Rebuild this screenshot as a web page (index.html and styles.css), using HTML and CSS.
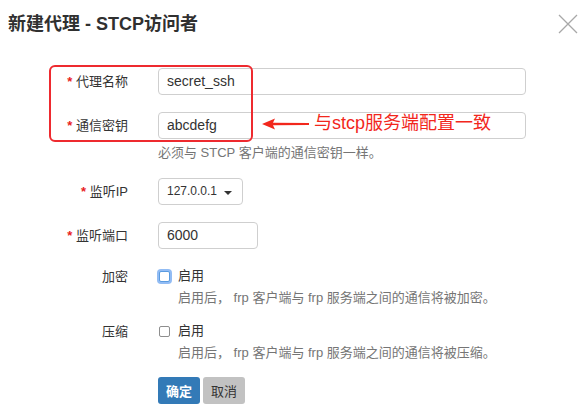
FILE: index.html
```html
<!DOCTYPE html>
<html lang="zh-CN">
<head>
<meta charset="utf-8">
<title>新建代理 - STCP访问者</title>
<link rel="stylesheet" href="styles.css">
</head>
<body>
<div class="dialog">
  <div class="header">
    <h1 class="title">新建代理 - STCP访问者</h1>
    <svg class="close" width="20" height="20" viewBox="0 0 20 20"><path d="M1 1L19 19M19 1L1 19" stroke="#a8a8a8" stroke-width="1.3" fill="none"/></svg>
  </div>
  <div class="form">
    <div class="row r-name">
      <label class="label"><span class="req">*</span> 代理名称</label>
      <div class="field"><div class="input wide">secret_ssh</div></div>
    </div>
    <div class="row r-key">
      <label class="label"><span class="req">*</span> 通信密钥</label>
      <div class="field">
        <div class="input wide">abcdefg</div>
        <div class="help help-key">必须与 STCP 客户端的通信密钥一样。</div>
      </div>
    </div>
    <div class="row r-ip">
      <label class="label"><span class="req">*</span> 监听IP</label>
      <div class="field"><div class="input select"><span class="sel-text">127.0.0.1</span><span class="caret"></span></div></div>
    </div>
    <div class="row r-port">
      <label class="label"><span class="req">*</span> 监听端口</label>
      <div class="field"><div class="input port">6000</div></div>
    </div>
    <div class="row r-enc">
      <label class="label lbl-check">加密</label>
      <div class="field">
        <div class="check"><span class="box focus"></span>启用</div>
        <div class="help help-check">启用后， frp 客户端与 frp 服务端之间的通信将被加密。</div>
      </div>
    </div>
    <div class="row r-zip">
      <label class="label lbl-check">压缩</label>
      <div class="field">
        <div class="check"><span class="box"></span>启用</div>
        <div class="help help-check">启用后， frp 客户端与 frp 服务端之间的通信将被压缩。</div>
      </div>
    </div>
    <div class="row r-btn">
      <div class="label"></div>
      <div class="field buttons">
        <button class="btn primary">确定</button>
        <button class="btn cancel">取消</button>
      </div>
    </div>
  </div>
  <div class="mark-box"></div>
  <svg class="arrow" width="50" height="12" viewBox="0 0 50 12"><path d="M1 6L14 0.5L12 4.8L48 5L48 7L12 7.2L14 11.5Z" fill="#f2271c"/></svg>
  <div class="note">与stcp服务端配置一致</div>
</div>
</body>
</html>
```
FILE: styles.css
```css
* { box-sizing: border-box; }
html, body { margin: 0; padding: 0; background: #fff; }
body {
  font-family: "Liberation Sans", "Noto Sans CJK SC", sans-serif;
  color: #333;
  width: 583px;
  height: 414px;
  overflow: hidden;
}
.dialog { position: relative; width: 583px; height: 414px; }
.header {
  height: 50px;
  display: flex;
  align-items: center;
  justify-content: space-between;
  padding: 0 5px 0 8px;
}
.title {
  margin: 0;
  font-size: 18px;
  font-weight: bold;
  color: #303030;
  line-height: 24px;
  position: relative;
  top: -1px;
}
.close { position: relative; top: -1px; }
.form { display: flex; flex-direction: column; padding-top: 18px; }
.row { display: grid; grid-template-columns: 128px 1fr; column-gap: 30px; }
.label {
  text-align: right;
  font-size: 13px;
  line-height: 27px;
  color: #333;
  white-space: nowrap;
}
.req { color: #e81d1d; font-weight: bold; }
.field { display: flex; flex-direction: column; align-items: flex-start; }
.input {
  height: 27px;
  border: 1px solid #cfcfcf;
  border-radius: 4px;
  font-size: 14px;
  line-height: 25px;
  padding: 0 8px;
  color: #333;
  background: #fff;
}
.wide { width: 368px; }
.port { width: 100px; }
.select {
  width: 85px;
  display: flex;
  align-items: center;
  justify-content: space-between;
  font-size: 12px;
  padding-right: 10px;
}
.caret {
  width: 0; height: 0;
  border-left: 4px solid transparent;
  border-right: 4px solid transparent;
  border-top: 4px solid #333;
  margin-top: 2px;
}
.r-name { margin-bottom: 17px; }
.r-key { margin-bottom: 16px; }
.r-ip { margin-bottom: 17px; }
.r-port { margin-bottom: 17px; }
.help { font-size: 13px; color: #757575; line-height: 18px; white-space: nowrap; }
.help-key { margin-top: 5px; }
.lbl-check { line-height: 24px; margin-top: -1px; }
.check {
  display: flex;
  align-items: center;
  font-size: 13px;
  line-height: 20px;
  height: 20px;
  color: #333;
}
.box {
  width: 11px; height: 11px;
  border: 1px solid #8e8e8e;
  border-radius: 2px;
  margin: 0 8px 0 1px;
  background: #fff;
}
.box.focus {
  border-color: #5a9be0;
  box-shadow: 0 0 0 2px rgba(110, 165, 240, 0.75);
}
.help-check { margin-top: 3px; padding-left: 20px; line-height: 18px; }
.r-enc { margin-bottom: 14px; }
.r-zip { margin-bottom: 15px; }
.buttons { flex-direction: row; gap: 3px; }
.btn {
  height: 27px;
  width: 42px;
  border: none;
  border-radius: 3px;
  font-family: inherit;
  font-size: 13px;
  padding: 0;
  cursor: pointer;
}
.primary { background: #337ab7; color: #fff; font-weight: bold; }
.cancel { background: #c2c2c2; color: #333; }
.mark-box {
  position: absolute;
  left: 49px; top: 65px;
  width: 204px; height: 77px;
  border: 2px solid #ee2a2f;
  border-radius: 6px;
}
.arrow { position: absolute; left: 261px; top: 118px; }
.note {
  position: absolute;
  left: 314px; top: 112px;
  font-size: 18px;
  line-height: 22px;
  color: #f2271c;
  white-space: nowrap;
}
```
